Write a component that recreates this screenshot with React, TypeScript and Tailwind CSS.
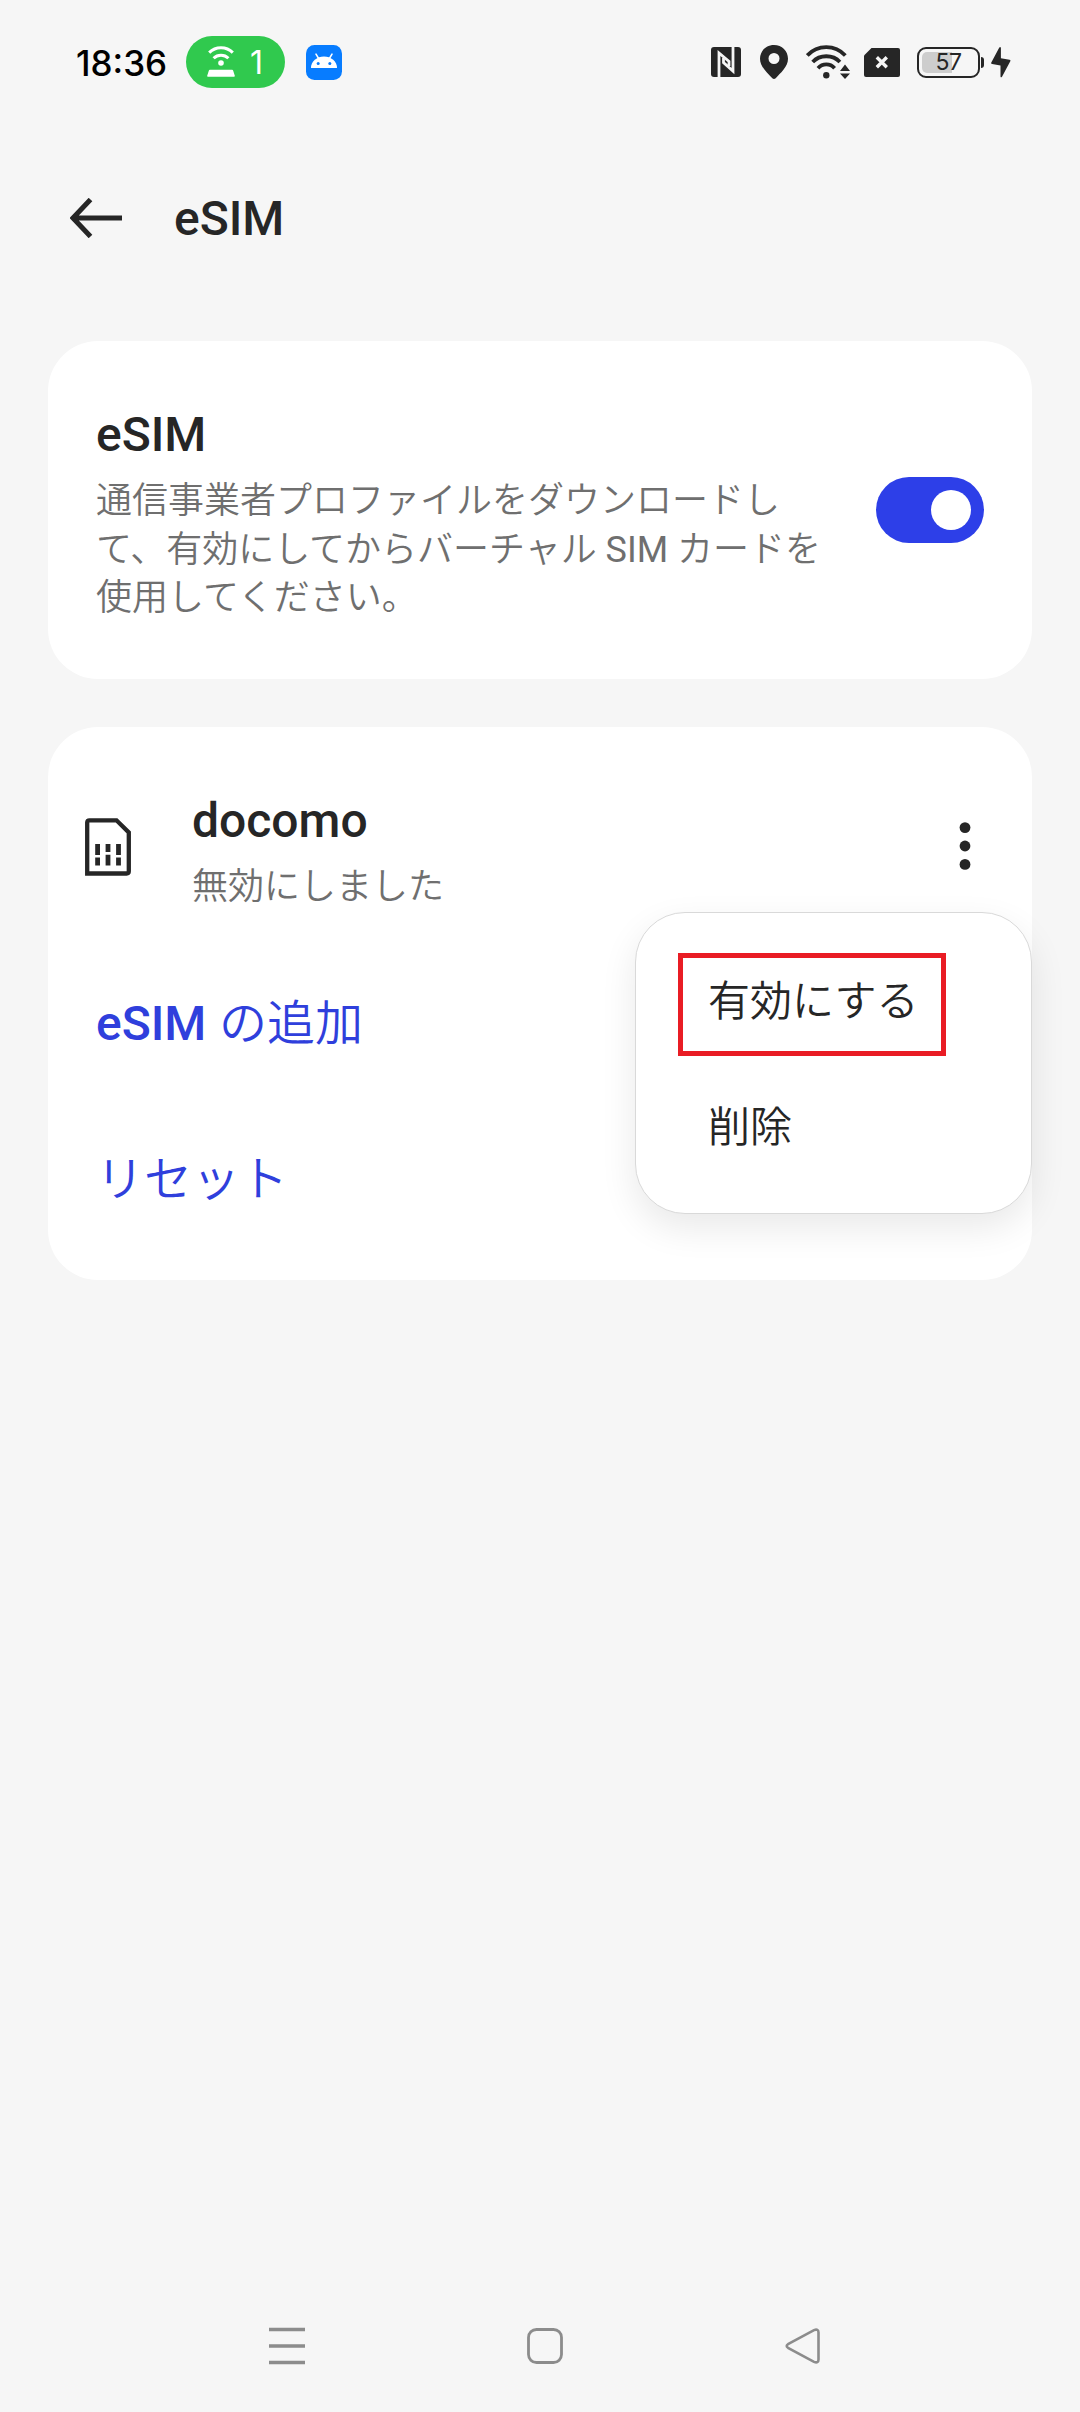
import { useState } from "react";

function HotspotIcon() {
  return (
    <svg width="28" height="32" viewBox="0 0 28 32" fill="none">
      <path d="M2.2 6.6 A16.5 16.5 0 0 1 25.8 6.6" stroke="#fff" strokeWidth="3" />
      <path d="M6.6 12.2 A10.5 10.5 0 0 1 21.4 12.2" stroke="#fff" strokeWidth="3" />
      <circle cx="14" cy="17" r="2.8" fill="#fff" />
      <path d="M3 23.8h22q1 0 1.2.9l1.6 5q.3 1.1-.8 1.1H1q-1.1 0-.8-1.1l1.6-5q.2-.9 1.2-.9z" fill="#fff" />
    </svg>
  );
}

function AndroidIcon() {
  return (
    <svg width="36" height="35" viewBox="0 0 36 35">
      <rect width="36" height="35" rx="8.5" fill="#077cff" />
      <path d="M5 23a13 11.5 0 0 1 26 0z" fill="#fff" />
      <path d="M10 9.2l3 5M26 9.2l-3 5" stroke="#fff" strokeWidth="1.6" strokeLinecap="round" />
      <circle cx="12.2" cy="18.5" r="1.5" fill="#077cff" />
      <circle cx="23.8" cy="18.5" r="1.5" fill="#077cff" />
    </svg>
  );
}

function NfcIcon() {
  return (
    <svg width="30" height="30" viewBox="0 0 30 30" fill="none">
      <rect width="30" height="30" rx="3" fill="#262626" />
      <path d="M8 30V6l10 8.500v4.500" stroke="#f6f6f6" strokeWidth="2.800" />
      <path d="M22 0v24L12.500 15.500V11" stroke="#f6f6f6" strokeWidth="2.800" />
    </svg>
  );
}

function PinIcon() {
  return (
    <svg width="28" height="34" viewBox="0 0 28 34">
      <path
        fillRule="evenodd"
        d="M14 0C6 0 0 6 0 13.800 0 22 7.500 28 12.300 33.200q1.700 1.500 3.400 0C20.500 28 28 22 28 13.800 28 6 22 0 14 0zm0 8a5.500 5.500 0 1 1 0 11 5.500 5.500 0 0 1 0-11z"
        fill="#262626"
      />
    </svg>
  );
}

function WifiIcon() {
  return (
    <svg width="44" height="34" viewBox="0 0 44 34" fill="none">
      <g stroke="#262626" strokeWidth="3.800">
        <path d="M1.300 10.500C11.500-.6 29-.6 39.300 10.500" />
        <path d="M6.700 17C13.800 9.300 26.800 9.300 33.900 17" />
        <path d="M12 23.200c4.500-5 12.100-5 16.600 0" />
      </g>
      <circle cx="20.300" cy="30.200" r="3.200" fill="#262626" />
      <path d="M39 19.500l5 6.500H34zM39 34l-5-5.500h10z" fill="#262626" />
    </svg>
  );
}

function NoSimIcon() {
  return (
    <svg width="36" height="29" viewBox="0 0 36 29">
      <path d="M7.500 0H34q2 0 2 2v25q0 2-2 2H2q-2 0-2-2V7.500z" fill="#262626" />
      <path d="M12.800 9.300l10 10M22.800 9.300l-10 10" stroke="#f6f6f6" strokeWidth="3.400" />
    </svg>
  );
}

function BoltIcon() {
  return (
    <svg width="20" height="31" viewBox="0 0 20 31">
      <path d="M8.300.6L.3 15.600q-.5 1.300.8 1.500l8.400 1.300v11q.3 1.600 1.500.4l8.300-15.600q.5-1.300-.8-1.500L9.900 11.200V1Q9.500-.6 8.300.6z" fill="#262626" />
    </svg>
  );
}

function Battery({ level }: { level: number }) {
  return (
    <div className="flex items-center gap-px">
      <div className="relative flex h-[31px] w-[63px] items-center justify-center rounded-[9px] border-2 border-[#262626] p-[3px]">
        <div className="h-full w-full overflow-hidden rounded-[5px]">
          <div className="h-full bg-[#cdcdcd]" style={{ width: `${level}%` }} />
        </div>
        <span className="absolute inset-0 text-center font-[Inter] text-[23px] leading-[27px] tracking-[-0.5px] text-[#262626]">
          {level}
        </span>
      </div>
      <div className="h-[11px] w-[3px] rounded-r-sm bg-[#262626]" />
    </div>
  );
}

function StatusBar() {
  return (
    <div className="flex h-[124px] items-center pl-[76px] pr-[69px]">
      <span className="mt-[2px] w-[110px] whitespace-nowrap font-[Inter] text-[35px] font-medium leading-none text-black">
        18:36
      </span>
      <div className="flex h-[52px] w-[99px] items-center rounded-full bg-[#30c94e] pl-[21px] text-white">
        <HotspotIcon />
        <span className="ml-[15px] mt-[2px] font-[Inter] text-[32px] leading-none">1</span>
      </div>
      <div className="ml-[21px]">
        <AndroidIcon />
      </div>
      <div className="ml-auto flex items-center">
        <NfcIcon />
        <div className="ml-[19px]">
          <PinIcon />
        </div>
        <div className="ml-[18px]">
          <WifiIcon />
        </div>
        <div className="ml-[14px]">
          <NoSimIcon />
        </div>
        <div className="ml-[17px]">
          <Battery level={57} />
        </div>
        <div className="ml-[7px]">
          <BoltIcon />
        </div>
      </div>
    </div>
  );
}

function Toggle({ on, onChange }: { on: boolean; onChange: (value: boolean) => void }) {
  return (
    <button
      type="button"
      role="switch"
      aria-checked={on}
      onClick={() => onChange(!on)}
      className={
        on
          ? "flex h-[66px] w-[108px] items-center justify-end rounded-full bg-[#2d3fe8] pr-[13px]"
          : "flex h-[66px] w-[108px] items-center justify-start rounded-full bg-gray-300 pl-[13px]"
      }
    >
      <span className="size-[40px] rounded-full bg-white" />
    </button>
  );
}

function SimIcon() {
  return (
    <svg className="mb-[11px]" width="46" height="58" viewBox="0 0 46 58" fill="none">
      <path d="M2.200 55.500V4.500q0-2.200 2.200-2.200H31.500L43.800 14.500v38.800q0 2.200-2.200 2.200z" stroke="#262626" strokeWidth="4.300" />
      <path d="M12.600 26v11M23 26v8M33.500 26v11M12.600 39.500v8M23 36.800v10.700M33.500 39.500v8" stroke="#262626" strokeWidth="4.800" />
    </svg>
  );
}

function OverflowMenu() {
  return (
    <div className="absolute right-0 top-[185px] h-[302px] w-[397px] rounded-[50px] border border-[#d9d9d9] bg-white text-[42px] font-[350] leading-[56px] text-[#262626] shadow-[0_14px_36px_rgba(0,0,0,0.09)]">
      <div className="ml-[42px] mt-[40px] h-[103px] w-[268px] border-5 border-[#e91c24] pl-[25px] pt-[16px]">
        有効にする
      </div>
      <div className="ml-[72px] mt-[44px]">削除</div>
    </div>
  );
}

function NavBar() {
  return (
    <div className="flex h-[132px] items-center pl-[269px]">
      <svg width="36" height="38" viewBox="0 0 36 38" stroke="#8c8c8c" strokeWidth="3.500">
        <path d="M0 2.500h36M0 19h36M0 35.500h36" />
      </svg>
      <svg className="ml-[222px]" width="36" height="36" viewBox="0 0 36 36" fill="none">
        <rect x="1.500" y="1.500" width="33" height="33" rx="8" stroke="#8c8c8c" strokeWidth="2.800" />
      </svg>
      <svg className="ml-[222px]" width="36" height="36" viewBox="0 0 36 36" fill="none">
        <path d="M3 16.200L29 2.100q4.500-1.600 4.500 2.400v27q0 4-4.500 2.400L3 19.800q-2.600-1.800 0-3.600z" stroke="#8c8c8c" strokeWidth="2.600" />
      </svg>
    </div>
  );
}

export default function App() {
  const [enabled, setEnabled] = useState(true);

  return (
    <div
      lang="ja"
      className="flex h-[2412px] w-[1080px] flex-col bg-[#f6f6f6] font-[Roboto,'Noto_Sans_CJK_JP',sans-serif] text-[#262626]"
    >
      <StatusBar />

      <header className="flex h-[189px] items-center pl-[70px]">
        <svg className="mb-px" width="52" height="40" viewBox="0 0 52 40" fill="none" stroke="#262626" strokeWidth="5">
          <path d="M52 20H3M20.500 1.500L3 20l17.500 18.500" />
        </svg>
        <h1 className="ml-[52px] text-[48px] font-medium leading-[56px]">eSIM</h1>
      </header>

      <main className="mt-[28px] flex flex-col gap-[48px] px-[48px]">
        <section className="flex h-[338px] items-center justify-between rounded-[50px] bg-white px-[48px]">
          <div className="mt-[10px]">
            <h2 className="text-[48px] font-medium leading-[56px]">eSIM</h2>
            <p className="mt-[14px] whitespace-nowrap text-[36px] font-[350] leading-[48.500px] text-[#6f6f6f]">
              通信事業者プロファイルをダウンロードし
              <br />
              て、有効にしてからバーチャル <span className="font-normal">SIM</span> カードを
              <br />
              使用してください。
            </p>
          </div>
          <Toggle on={enabled} onChange={setEnabled} />
        </section>

        <section className="relative h-[553px] rounded-[50px] bg-white pt-[66px]">
          <div className="flex items-center pl-[37px] pr-[61px]">
            <SimIcon />
            <div className="ml-[61px]">
              <h2 className="text-[48px] font-medium leading-[56px]">docomo</h2>
              <p className="mt-[14px] text-[36px] font-[350] leading-[48px] text-[#6f6f6f]">無効にしました</p>
            </div>
            <svg className="mb-[12px] ml-auto" width="12" height="48" viewBox="0 0 12 48" fill="#262626">
              <circle cx="6" cy="5.600" r="5.400" />
              <circle cx="6" cy="24" r="5.400" />
              <circle cx="6" cy="42.400" r="5.400" />
            </svg>
          </div>
          <div className="mt-[85px] flex flex-col gap-[100px] pl-[48px] text-[48px] font-[350] leading-[56px] text-[#2f3fdc]">
            <div>
              <span className="mr-px font-medium">eSIM</span> の追加
            </div>
            <div>リセット</div>
          </div>
          <OverflowMenu />
        </section>
      </main>

      <div className="mt-auto">
        <NavBar />
      </div>
    </div>
  );
}
